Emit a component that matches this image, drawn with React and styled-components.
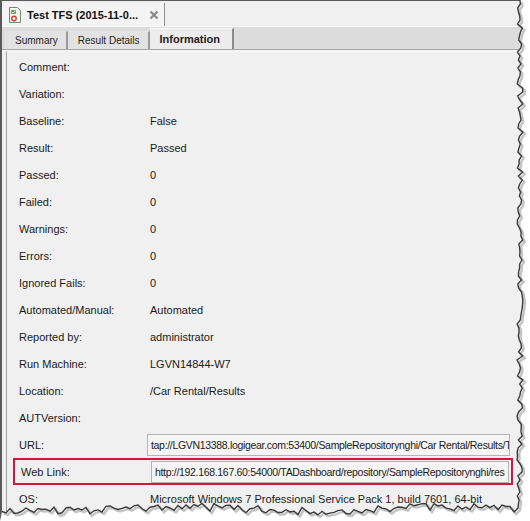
import React from 'react';
import styled, {createGlobalStyle} from 'styled-components';

const GlobalStyle = createGlobalStyle`
  html, body {
    margin: 0;
    padding: 0;
    background: #fff;
  }
  body {
    font-family: Tahoma, "Liberation Sans", "DejaVu Sans", sans-serif;
    font-size: 11px;
    color: #1a1a1a;
  }
`;

const rows = [
    {label: 'Comment:'},
    {label: 'Variation:'},
    {label: 'Baseline:', value: 'False'},
    {label: 'Result:', value: 'Passed'},
    {label: 'Passed:', value: '0'},
    {label: 'Failed:', value: '0'},
    {label: 'Warnings:', value: '0'},
    {label: 'Errors:', value: '0'},
    {label: 'Ignored Fails:', value: '0'},
    {label: 'Automated/Manual:', value: 'Automated'},
    {label: 'Reported by:', value: 'administrator'},
    {label: 'Run Machine:', value: 'LGVN14844-W7'},
    {label: 'Location:', value: '/Car Rental/Results'},
    {label: 'AUTVersion:'},
    {label: 'URL:', box: 'tap://LGVN13388.logigear.com:53400/SampleRepositorynghi/Car Rental/Results/T'},
    {label: 'Web Link:', box: 'http://192.168.167.60:54000/TADashboard/repository/SampleRepositorynghi/res', marked: true},
    {label: 'OS:', value: 'Microsoft Windows 7 Professional Service Pack 1, build 7601, 64-bit'},
];

const Frame = styled.div`
  position: relative;
  width: 530px;
  height: 521px;
  overflow: hidden;
  background: #fff;
`;

const Window = styled.div`
  width: 524px;
  height: 521px;
  background: #f0f0f0;
  border-left: 2px solid #5a5a5a;
  border-top: 1px solid #5a5a5a;
  box-sizing: border-box;
`;

const DocBar = styled.div`
  display: flex;
  height: 25px;
  background: #f0f0f0;
  border-bottom: 1px solid #fafafa;
`;

const DocTab = styled.div`
  display: flex;
  flex: none;
  align-items: center;
  gap: 5px;
  width: 163px;
  padding-left: 6px;
  box-sizing: border-box;
  background: #f4f4f4;
  border-right: 1px solid #8c8c8c;
  margin-top: 2px;
  white-space: nowrap;
`;

const DocTitle = styled.span`
  font-weight: bold;
  font-size: 11px;
  color: #111;
`;

const Close = styled.span`
  display: flex;
  margin-left: 6px;
`;

const SubBar = styled.div`
  display: flex;
  align-items: flex-end;
  height: 22px;
  padding-left: 3px;
  background: #dcdcdc;
  border-bottom: 1px solid #a8a8a8;
`;

const SubTab = styled.div`
  display: flex;
  align-items: center;
  white-space: nowrap;
  height: ${p => (p.$active ? '20px' : '17px')};
  padding: ${p => (p.$active ? '0 12px 0 10px' : '0 8px 0 10px')};
  background: ${p => (p.$active ? '#ececec' : '#e2e2e2')};
  border-right: 2px solid ${p => (p.$active ? '#8a8a8a' : '#9a9a9a')};
  border-top: 1px solid ${p => (p.$active ? '#fafafa' : 'transparent')};
  font-weight: ${p => (p.$active ? 'bold' : 'normal')};
  font-size: ${p => (p.$active ? '11px' : '10px')};
  color: #222;
`;

const Panel = styled.div`
  margin-left: 4px;
  margin-top: 1px;
  padding-top: 1px;
  border-left: 1px solid #a0a0a0;
  border-top: 1px solid #f8f8f8;
  height: 480px;
`;

const Row = styled.div`
  display: grid;
  grid-template-columns: ${p => (p.$marked ? '133px' : '131px')} 1fr;
  align-items: center;
  height: 27px;
  box-sizing: border-box;
  width: ${p => (p.$marked ? '500px' : '505px')};
  margin-left: ${p => (p.$marked ? '6px' : '0')};
  padding-left: ${p => (p.$marked ? '6px' : '12px')};
  padding-right: 2px;
  border: ${p => (p.$marked ? '2px solid #d2163c' : 'none')};
`;

const Label = styled.span`
  color: #1a1a1a;
`;

const Value = styled.span`
  color: #1a1a1a;
  white-space: nowrap;
`;

const TextBox = styled.div`
  height: 20px;
  margin-left: -3px;
  padding-left: 3px;
  display: flex;
  align-items: center;
  background: #f5f5f5;
  border: 1px solid #b4b4b4;
  white-space: nowrap;
  overflow: hidden;
  font-size: 10.5px;
  letter-spacing: -0.32px;
  color: #1a1a1a;
`;

const Overlay = styled.svg`
  position: absolute;
  left: 0;
  top: 0;
  pointer-events: none;
`;

// jagged edge points, seeded so every render gives the same tear
function tearPoints() {
    let seed = 7;
    const rnd = () => {
        seed = (seed * 9301 + 49297) % 233280;
        return seed / 233280;
    };
    const pts = [];
    for (let y = 0; y <= 506; y += 4) {
        pts.push([520 + (rnd() - 0.5) * 6, y]);
    }
    for (let x = 518; x >= 0; x -= 4) {
        pts.push([x, 509 + (rnd() - 0.5) * 8 + Math.sin(x / 40) * 2]);
    }
    return pts;
}

const TornEdge = () => {
    const pts = tearPoints();
    const line = pts.map(p => p[0].toFixed(1) + ',' + p[1].toFixed(1)).join(' ');
    const shadow = pts.map(p => (p[0] + 2).toFixed(1) + ',' + (p[1] + 2).toFixed(1)).join(' ');
    return (
        <Overlay width="530" height="521">
            <polygon points={line + ' 0,521 530,521 530,0'} fill="#fff" />
            <polyline points={shadow} fill="none" stroke="#c4c4c4" strokeWidth="2.5" />
            <polyline points={line} fill="none" stroke="#3a3a3a" strokeWidth="1.4" />
        </Overlay>
    );
};

const DocIcon = () => (
    <svg width="14" height="16" viewBox="0 0 14 16">
        <path d="M1.5 0.5h8l3 3v12h-11z" fill="#f4f8f2" stroke="#6c8f6a" />
        <rect x="3" y="3" width="5" height="4" fill="#5fb04f" />
        <path d="M3.8 5l1.2 1.2 2.3-2.4" stroke="#fff" strokeWidth="1" fill="none" />
        <circle cx="6" cy="11.5" r="2.2" fill="none" stroke="#d43a3a" strokeWidth="1.4" />
    </svg>
);

const CloseIcon = () => (
    <svg width="10" height="10" viewBox="0 0 10 10">
        <path d="M1.5 1.5l7 7M8.5 1.5l-7 7" stroke="#8c8c8c" strokeWidth="2.4" />
    </svg>
);

export default function App() {
    return (
        <Frame>
            <GlobalStyle />
            <Window>
                <DocBar>
                    <DocTab>
                        <DocIcon />
                        <DocTitle>Test TFS (2015-11-0...</DocTitle>
                        <Close><CloseIcon /></Close>
                    </DocTab>
                </DocBar>
                <SubBar>
                    <SubTab>Summary</SubTab>
                    <SubTab>Result Details</SubTab>
                    <SubTab $active>Information</SubTab>
                </SubBar>
                <Panel>
                    {rows.map(r => (
                        <Row key={r.label} $marked={r.marked}>
                            <Label>{r.label}</Label>
                            {r.box ? <TextBox>{r.box}</TextBox> : <Value>{r.value}</Value>}
                        </Row>
                    ))}
                </Panel>
            </Window>
            <TornEdge />
        </Frame>
    );
}
